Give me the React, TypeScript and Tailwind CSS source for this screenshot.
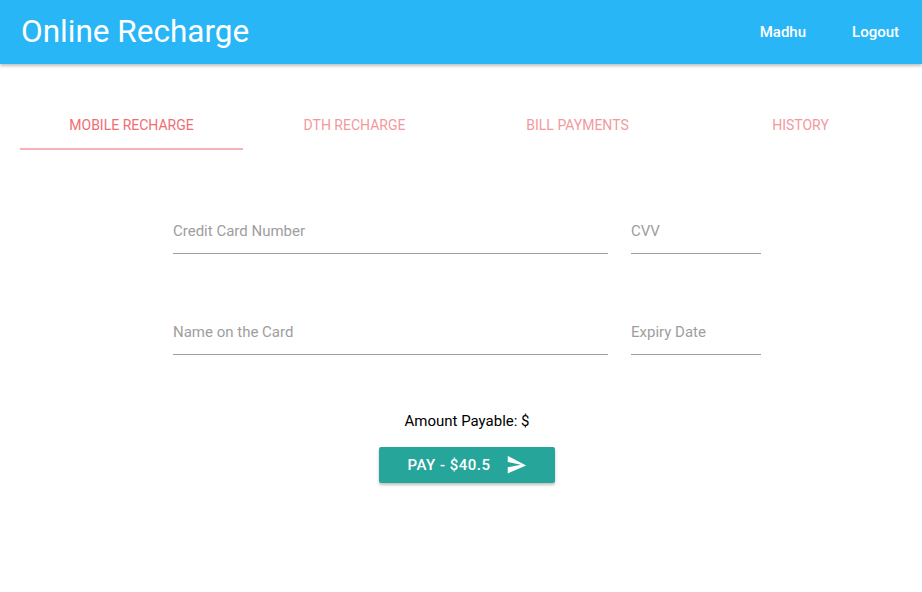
import React, { useState } from "react";

const tabs = ["Mobile Recharge", "DTH Recharge", "Bill Payments", "History"];

function Field({ label, width }: { label: string; width: string }) {
  return (
    <div className={`${width} h-[44px] border-b border-[#9e9e9e] flex items-center`}>
      <span className="text-[15px] text-[#9e9e9e]">{label}</span>
    </div>
  );
}

export default function App() {
  const [active, setActive] = useState(0);

  return (
    <div className="min-h-[592px] bg-white font-['Roboto',sans-serif]">
      <nav className="h-16 bg-[#29b6f6] flex items-center justify-between shadow-[0_2px_3px_rgba(0,0,0,0.25)] relative">
        <span className="ml-[21px] text-[31.5px] text-white leading-none">Online Recharge</span>
        <ul className="flex items-center mr-[23px] text-[15px] font-medium text-white">
          <li className="mr-[46px]">Madhu</li>
          <li>Logout</li>
        </ul>
      </nav>

      <div className="flex mt-[38px] ml-5">
        {tabs.map((t, i) => (
          <button
            key={t}
            onClick={() => setActive(i)}
            className={`w-[223px] h-12 flex items-center justify-center text-[14px] uppercase border-b-2 ${
              i === active ? "text-[#ee6e73] border-[#f6b2b5]" : "text-[#f3999d] border-transparent"
            }`}
          >
            {t}
          </button>
        ))}
      </div>

      <div className="ml-[173px] w-[588px] mt-[60px]">
        <div className="flex gap-[23px]">
          <Field label="Credit Card Number" width="w-[435px]" />
          <Field label="CVV" width="w-[130px]" />
        </div>
        <div className="flex gap-[23px] mt-[57px]">
          <Field label="Name on the Card" width="w-[435px]" />
          <Field label="Expiry Date" width="w-[130px]" />
        </div>

        <div className="flex flex-col items-center mt-[55px]">
          <p className="text-[15px] leading-[22px] text-black">Amount Payable: $</p>
          <button className="mt-[15px] h-9 w-[176px] flex items-center justify-center gap-[15px] rounded-[2px] bg-[#26a69a] text-white text-[15px] font-medium tracking-[0.5px] uppercase shadow-[0_2px_3px_rgba(0,0,0,0.25)]">
            <span>Pay - $40.5</span>
            <svg width="21" height="21" viewBox="0 0 24 24" fill="white">
              <path d="M2.01 21L2 14l15-3-15-3 .01-7L23 12 2.01 21z" />
            </svg>
          </button>
        </div>
      </div>
    </div>
  );
}
